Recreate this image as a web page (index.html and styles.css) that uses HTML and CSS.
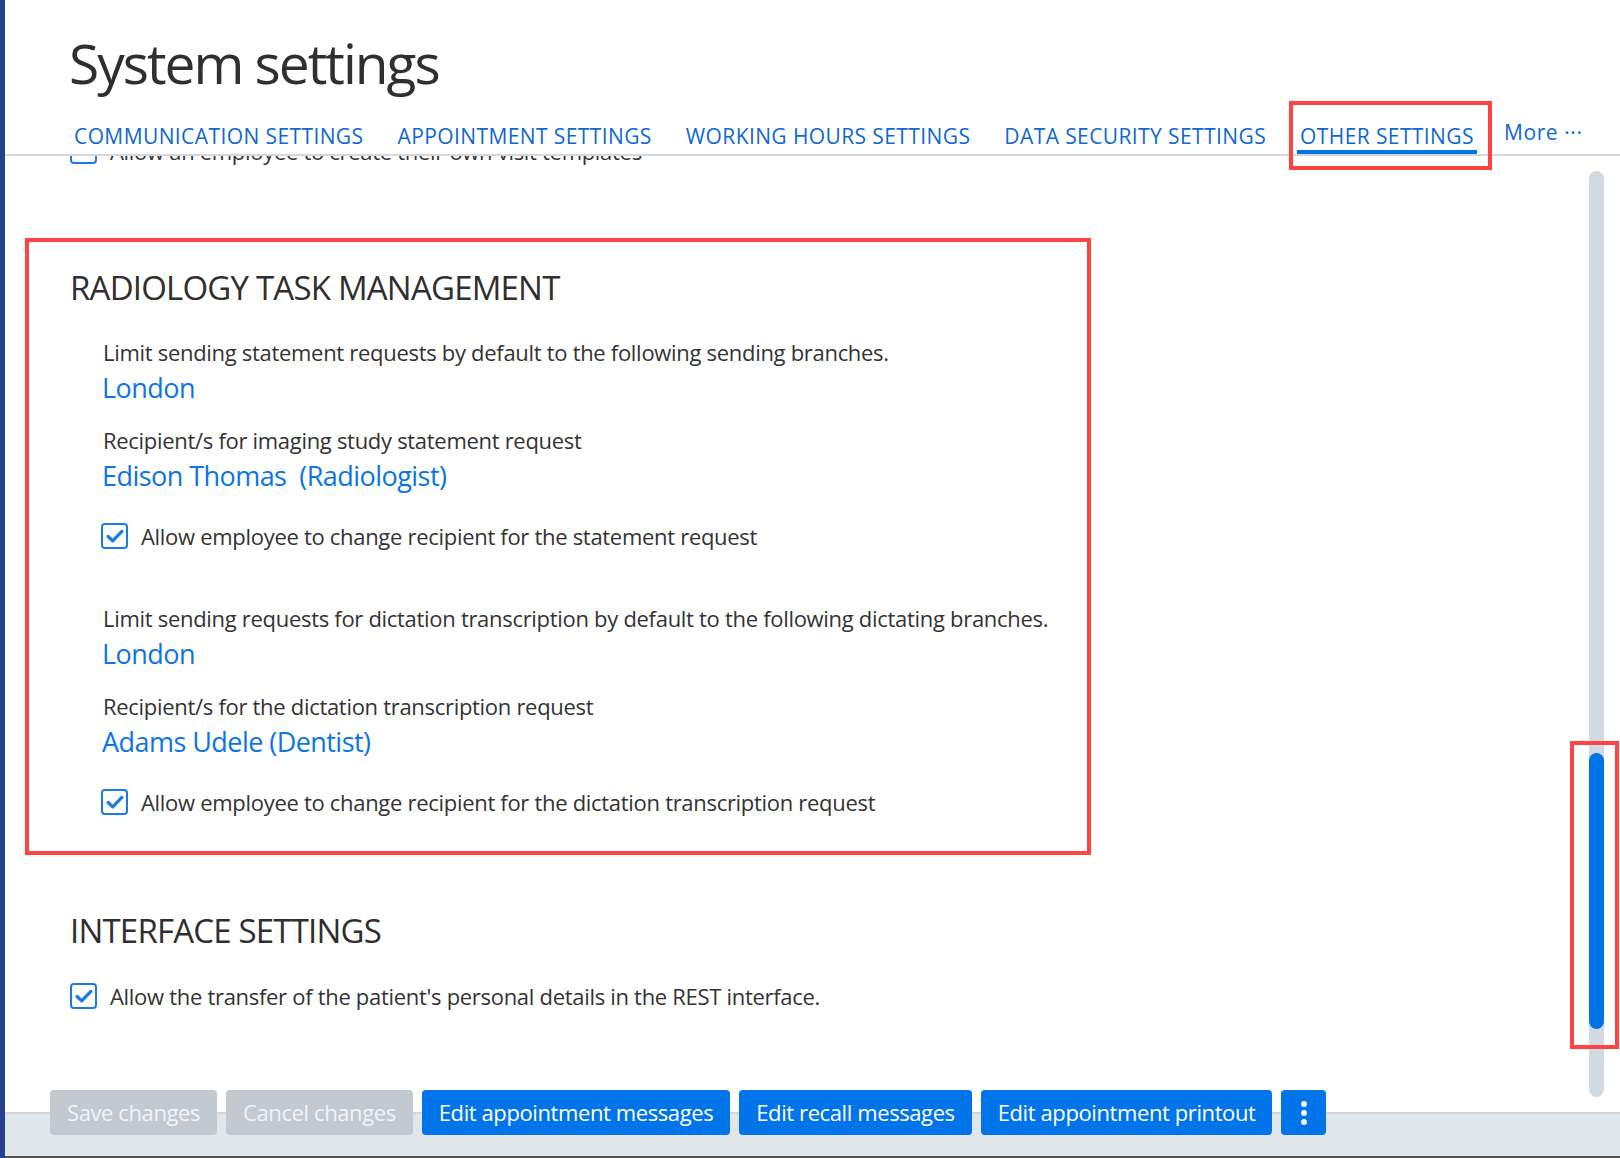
FILE: index.html
```html
<!DOCTYPE html>
<html lang="en">
<head>
    <meta charset="UTF-8">
    <meta name="viewport" content="width=device-width, initial-scale=1.0">
    <title>System settings</title>
    <link rel="stylesheet" href="styles.css">
</head>
<body>
    <div class="app">
        <!-- header with page title and tabs -->
        <header class="page-header">
            <h1 class="page-title">System settings</h1>
            <nav class="tabs">
                <a class="tab">COMMUNICATION SETTINGS</a>
                <a class="tab">APPOINTMENT SETTINGS</a>
                <a class="tab">WORKING HOURS SETTINGS</a>
                <a class="tab">DATA SECURITY SETTINGS</a>
                <a class="tab active">OTHER SETTINGS</a>
                <a class="tab more">More ···</a>
            </nav>
        </header>

        <div class="workspace">
            <div class="content">
                <div class="content-inner">
                    <label class="check-row first-row">
                        <span class="checkbox"></span>
                        Allow an employee to create their own visit templates
                    </label>

                    <section class="settings-section highlighted">
                        <h2 class="section-title">RADIOLOGY TASK MANAGEMENT</h2>
                        <div class="fields">
                            <div class="field">
                                <div class="field-label">Limit sending statement requests by default to the following sending branches.</div>
                                <a class="field-value">London</a>
                            </div>
                            <div class="field">
                                <div class="field-label">Recipient/s for imaging study statement request</div>
                                <a class="field-value">Edison Thomas&nbsp; (Radiologist)</a>
                            </div>
                            <label class="check-row">
                                <span class="checkbox checked">
                                    <svg viewBox="0 0 24 24" width="22" height="22"><path d="M4.5 12.5l5 4.8L19.5 7" fill="none" stroke="#1a7be6" stroke-width="3.6" stroke-linecap="round" stroke-linejoin="round"/></svg>
                                </span>
                                Allow employee to change recipient for the statement request
                            </label>

                            <div class="field spaced">
                                <div class="field-label">Limit sending requests for dictation transcription by default to the following dictating branches.</div>
                                <a class="field-value">London</a>
                            </div>
                            <div class="field">
                                <div class="field-label">Recipient/s for the dictation transcription request</div>
                                <a class="field-value">Adams Udele (Dentist)</a>
                            </div>
                            <label class="check-row">
                                <span class="checkbox checked">
                                    <svg viewBox="0 0 24 24" width="22" height="22"><path d="M4.5 12.5l5 4.8L19.5 7" fill="none" stroke="#1a7be6" stroke-width="3.6" stroke-linecap="round" stroke-linejoin="round"/></svg>
                                </span>
                                Allow employee to change recipient for the dictation transcription request
                            </label>
                        </div>
                    </section>

                    <section class="settings-section interface">
                        <h2 class="section-title">INTERFACE SETTINGS</h2>
                        <label class="check-row">
                            <span class="checkbox checked">
                                <svg viewBox="0 0 24 24" width="22" height="22"><path d="M4.5 12.5l5 4.8L19.5 7" fill="none" stroke="#1a7be6" stroke-width="3.6" stroke-linecap="round" stroke-linejoin="round"/></svg>
                            </span>
                            Allow the transfer of the patient's personal details in the REST interface.
                        </label>
                    </section>
                </div>
            </div>

            <!-- custom scrollbar -->
            <div class="scrollbar">
                <div class="scroll-track">
                    <div class="scroll-thumb"></div>
                </div>
                <div class="annot-box"></div>
            </div>
        </div>

        <footer class="action-bar">
            <button class="btn disabled">Save changes</button>
            <button class="btn disabled">Cancel changes</button>
            <button class="btn">Edit appointment messages</button>
            <button class="btn">Edit recall messages</button>
            <button class="btn">Edit appointment printout</button>
            <button class="btn kebab">
                <svg viewBox="0 0 12 30" width="12" height="30"><circle cx="6" cy="6" r="2.9" fill="#fff"/><circle cx="6" cy="15" r="2.9" fill="#fff"/><circle cx="6" cy="24" r="2.9" fill="#fff"/></svg>
            </button>
        </footer>
    </div>
</body>
</html>
```

FILE: styles.css
```css
/* page */
body {
    margin: 0;
    padding: 0;
    background-color: #fff;
    font-family: "Open Sans", "Noto Sans", Arial, sans-serif;
    color: #333;
}

.app {
    height: 100vh;
    border-left: 5px solid #26408e;
    display: flex;
    flex-direction: column;
    overflow: hidden;
}

/* header */
.page-header {
    padding: 29px 0 0 66px;
    border-bottom: 2px solid #d3d8de;
    background-color: #fff;
}

.page-title {
    margin: 0;
    font-size: 55px;
    font-weight: 400;
    line-height: 68px;
    letter-spacing: -2px;
    color: #2f2f2f;
    text-indent: -2px;
}

.tabs {
    display: flex;
    align-items: flex-start;
    gap: 28px;
    margin-top: 25px;
}

.tab {
    padding: 0 3px;
    font-size: 21px;
    line-height: 28px;
    letter-spacing: 0.4px;
    color: #0f68cf;
    border-bottom: 4px solid transparent;
    white-space: nowrap;
    cursor: pointer;
}

.tab.active {
    position: relative;
    border-bottom-color: #0073e6;
}

/* red annotation around the active tab */
.tab.active::after {
    content: "";
    position: absolute;
    z-index: 2;
    left: -8px;
    right: -15px;
    top: -21px;
    bottom: -20px;
    border: 4px solid #ff4343;
}

.tab.more {
    margin-top: -4px;
    margin-left: -4px;
    letter-spacing: 0.6px;
}

/* scroll area */
.workspace {
    flex: 1;
    display: flex;
    min-height: 0;
}

.content {
    flex: 1;
    overflow: hidden;
    padding-left: 65px;
    letter-spacing: -0.3px;
}

.content-inner {
    margin-top: -22px;
}

.check-row {
    display: flex;
    align-items: center;
    height: 34px;
    font-size: 22px;
    line-height: 34px;
    white-space: nowrap;
}

.checkbox {
    flex: none;
    box-sizing: border-box;
    width: 27px;
    height: 26px;
    margin-right: 13px;
    border: 2px solid #1a7be6;
    border-radius: 4px;
    background-color: #fff;
    display: flex;
    align-items: center;
    justify-content: center;
}

.settings-section {
    margin-top: 53px;
}

.settings-section.highlighted {
    margin-top: 70px;
    margin-left: -45px;
    width: 1066px;
    box-sizing: border-box;
    border: 4px solid #ff4343;
    padding: 23px 0 32px 41px;
}

.section-title {
    margin: 0;
    font-size: 33px;
    font-weight: 400;
    line-height: 46px;
    letter-spacing: -0.8px;
    color: #2f2f2f;
}

.fields {
    margin-top: 26px;
    padding-left: 31px;
}

.field + .field {
    margin-top: 16px;
}

.field.spaced {
    margin-top: 50px;
}

.field-label {
    padding-left: 2px;
    font-size: 22px;
    line-height: 30px;
    white-space: nowrap;
}

.field-value {
    display: block;
    padding-left: 1px;
    font-size: 27px;
    line-height: 42px;
    letter-spacing: -0.55px;
    color: #0c74e4;
    cursor: pointer;
}

.fields .check-row {
    margin-top: 22px;
}

.interface .check-row {
    margin-top: 25px;
}

/* scrollbar */
.scrollbar {
    position: relative;
    flex: none;
    width: 31px;
    padding-top: 15px;
}

.scroll-track {
    width: 15px;
    height: 926px;
    border-radius: 8px;
    background-color: #d3d9e0;
    overflow: hidden;
}

.scroll-thumb {
    margin-top: 582px;
    height: 276px;
    border-radius: 8px;
    background-color: #0073e6;
}

.annot-box {
    position: absolute;
    left: -19px;
    top: 585px;
    width: 49px;
    height: 308px;
    box-sizing: border-box;
    border: 4px solid #ff4343;
}

/* bottom buttons */
.action-bar {
    flex: none;
    height: 46px;
    box-sizing: border-box;
    display: flex;
    align-items: flex-start;
    gap: 9px;
    padding-left: 45px;
    background-color: #e1e6ea;
    border-top: 2px solid #cfd6dd;
    border-bottom: 2px solid #55524f;
}

.btn {
    margin-top: -24px;
    height: 45px;
    padding: 0 17px;
    border: none;
    border-radius: 4px;
    background-color: #0074e8;
    color: #fff;
    font-family: inherit;
    font-size: 22px;
    line-height: 45px;
    letter-spacing: -0.4px;
    white-space: nowrap;
    cursor: pointer;
}

.btn.disabled {
    background-color: #c2c9d1;
    color: #f1f3f6;
    cursor: default;
}

.btn.kebab {
    width: 45px;
    padding: 0;
    display: flex;
    align-items: center;
    justify-content: center;
}
```
